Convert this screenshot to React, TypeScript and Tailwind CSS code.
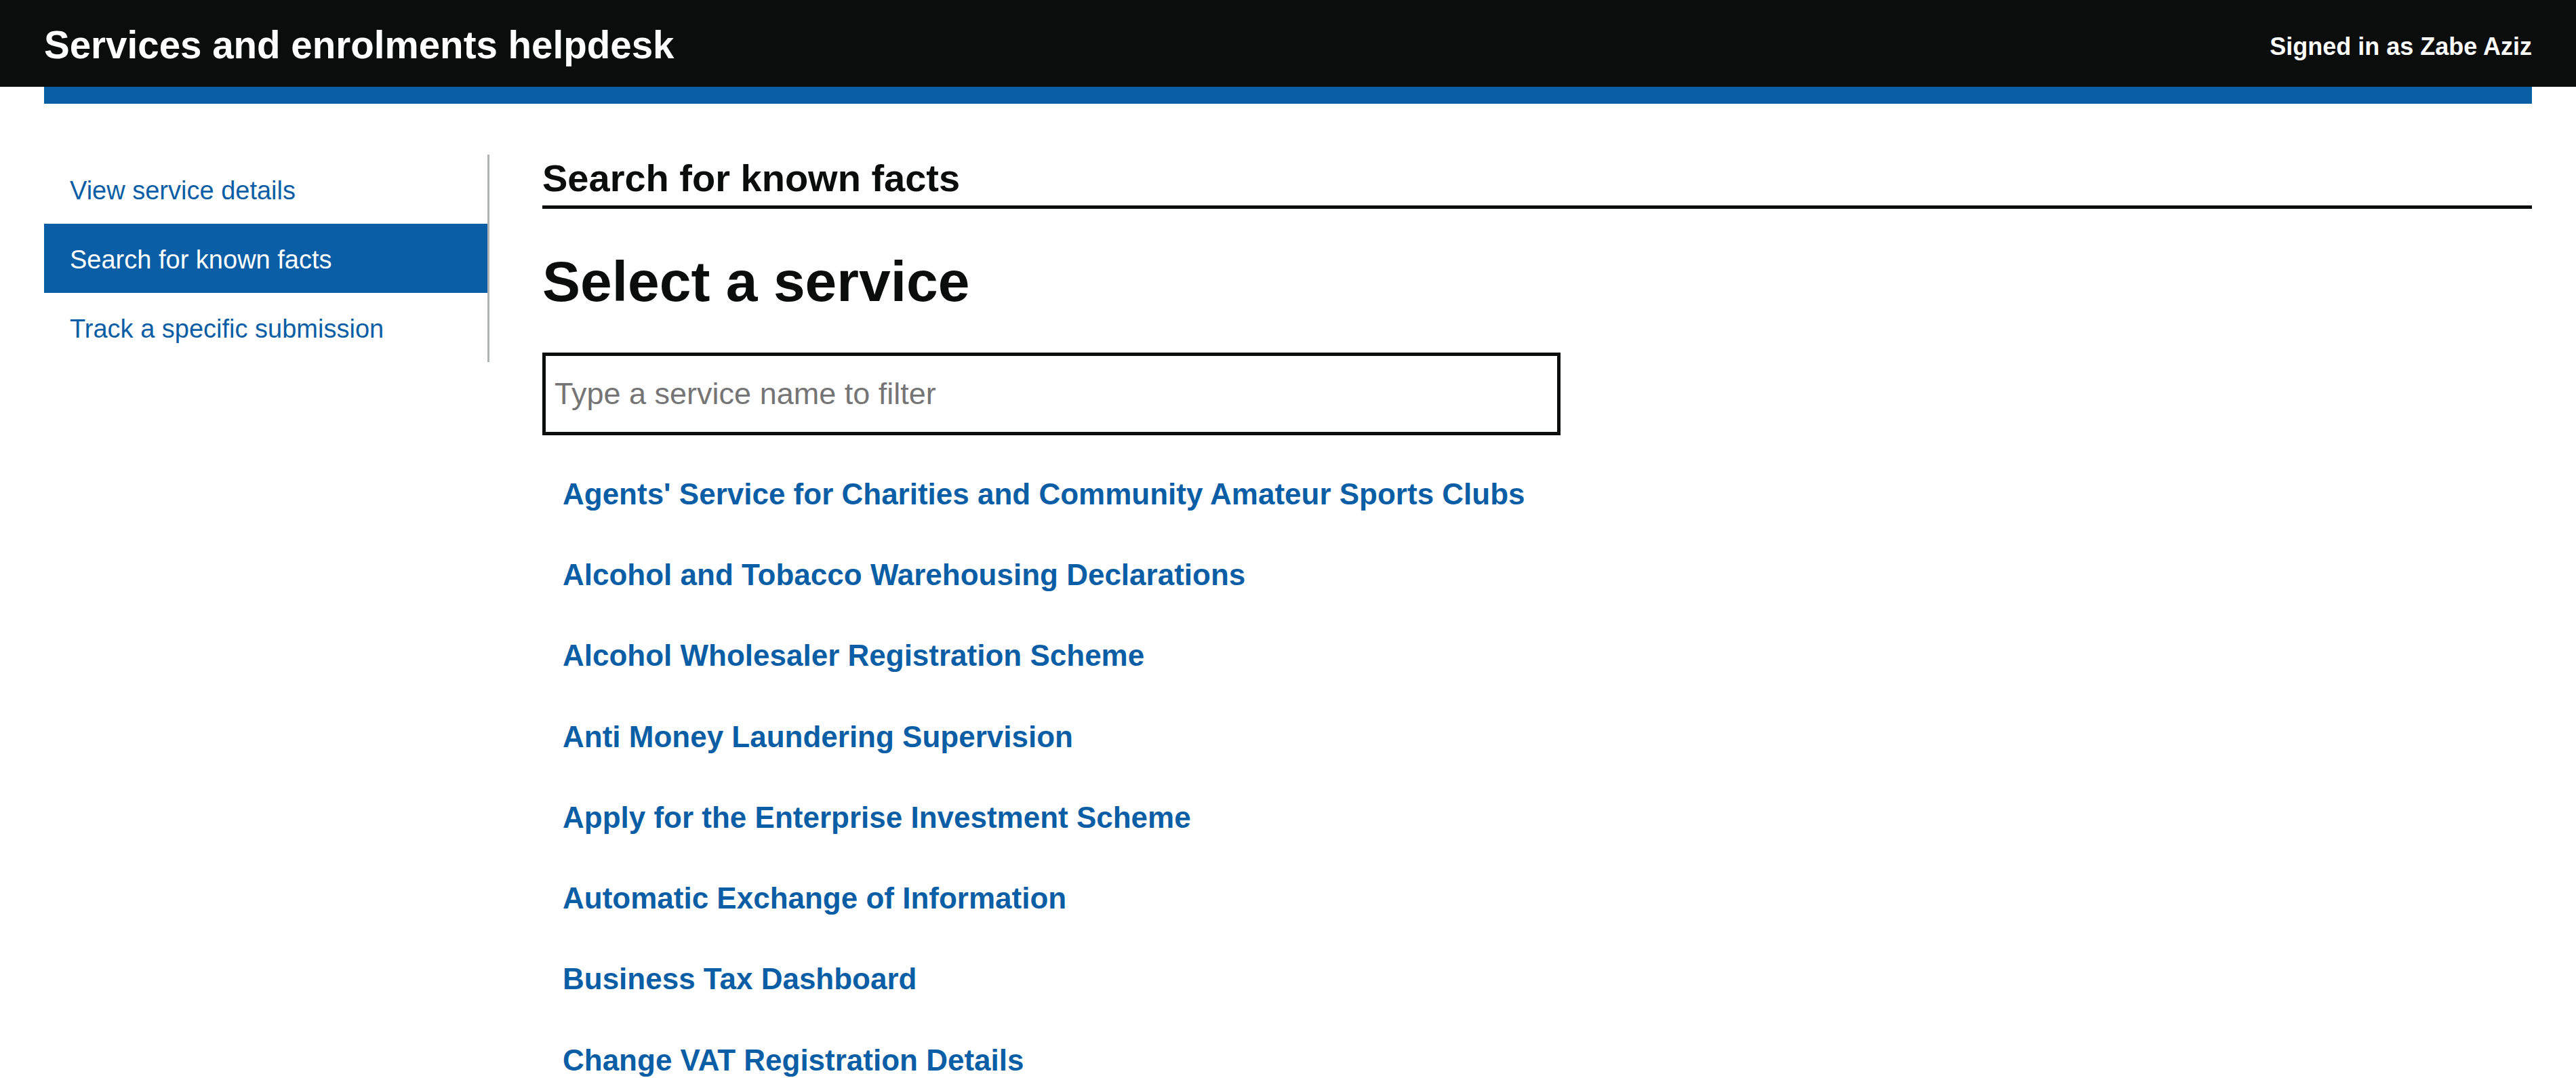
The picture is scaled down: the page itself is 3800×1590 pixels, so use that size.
import React, { useState } from "react";

const services = [
  "Agents' Service for Charities and Community Amateur Sports Clubs",
  "Alcohol and Tobacco Warehousing Declarations",
  "Alcohol Wholesaler Registration Scheme",
  "Anti Money Laundering Supervision",
  "Apply for the Enterprise Investment Scheme",
  "Automatic Exchange of Information",
  "Business Tax Dashboard",
  "Change VAT Registration Details",
];

const navItems = [
  "View service details",
  "Search for known facts",
  "Track a specific submission",
];

export default function App() {
  const [filter, setFilter] = useState("");
  const active = "Search for known facts";

  const visible = services.filter((s) =>
    s.toLowerCase().includes(filter.toLowerCase()),
  );

  return (
    <div
      className="h-[1590px] overflow-hidden bg-white text-[#0b0c0c]"
      style={{ fontFamily: '"Liberation Sans", Arial, sans-serif' }}
    >
      {/* header */}
      <header className="bg-[#0b0c0c]">
        <div className="flex h-[128px] items-center justify-between px-[65px]">
          <span className="pt-[6px] text-[56.5px] font-bold leading-none text-white">
            Services and enrolments helpdesk
          </span>
          <span className="pt-[10px] text-[36px] font-bold leading-none text-white">
            Signed in as Zabe Aziz
          </span>
        </div>
      </header>
      <div className="px-[65px]">
        <div className="h-[25px] bg-[#0a5ea5]" />

        <div className="flex pt-[75px]">
          {/* side nav */}
          <nav className="w-[657px] shrink-0">
            <ul className="border-r-[3px] border-[#b1b4b6]">
              {navItems.map((item) => (
                <li key={item}>
                  <a
                    href="#"
                    className={
                      item === active
                        ? "flex h-[102px] items-center bg-[#0a5ea5] pl-[38px] pt-[4px] text-[38px] text-white"
                        : "flex h-[102px] items-center pl-[38px] pt-[4px] text-[38px] text-[#0a5ea5]"
                    }
                  >
                    {item}
                  </a>
                </li>
              ))}
            </ul>
          </nav>

          {/* main */}
          <main className="ml-[78px] flex-1">
            <h2 className="border-b-[5px] border-[#0b0c0c] pb-[5px] text-[56px] font-bold leading-[70px]">
              Search for known facts
            </h2>
            <h1 className="mt-[62px] text-[84px] font-bold leading-[90px]">
              Select a service
            </h1>
            <input
              type="text"
              value={filter}
              onChange={(e) => setFilter(e.target.value)}
              placeholder="Type a service name to filter"
              className="mt-[60px] block h-[122px] w-[1502px] border-[5px] border-[#0b0c0c] px-[13px] text-[45px] text-[#0b0c0c] outline-none placeholder:text-[#757575]"
            />
            <ul className="mt-[27px] pl-[30px]">
              {visible.map((s) => (
                <li key={s} className="flex h-[119.3px] items-center">
                  <a
                    href="#"
                    className="text-[44px] font-bold text-[#0a5ea5]"
                  >
                    {s}
                  </a>
                </li>
              ))}
            </ul>
          </main>
        </div>
      </div>
    </div>
  );
}
